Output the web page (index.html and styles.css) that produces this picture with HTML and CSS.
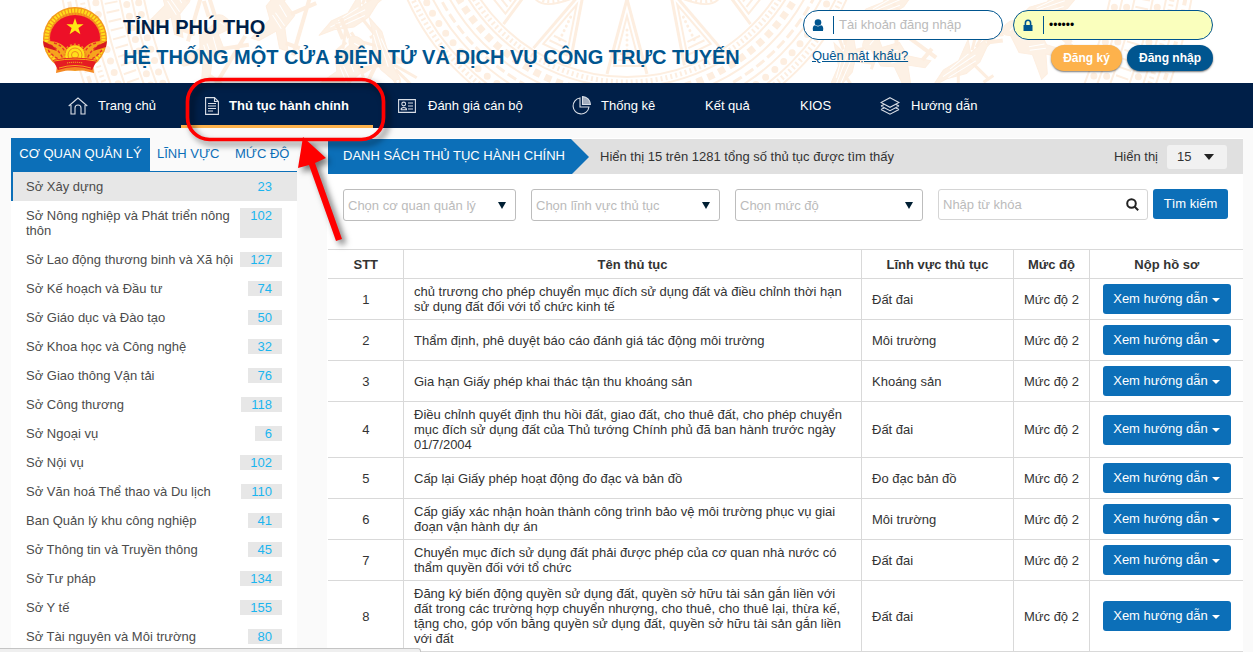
FILE: index.html
```html
<!DOCTYPE html>
<html lang="vi">
<head>
<meta charset="utf-8">
<title>Hệ thống một cửa điện tử và dịch vụ công trực tuyến</title>
<link rel="stylesheet" href="styles.css">
</head>
<body>
<header class="header">
  <svg class="pattern" viewBox="0 0 1253 83" fill="none" stroke="#fdeee0">
    <defs>
      <g id="ray"><path d="M0 99L-20 174M0 99L20 174" stroke-width="3"/><path d="M0 116L-13 166H13Z" stroke-width="2"/><path d="M-7 154H7M-9 160H9" stroke-width="2"/><path d="M0 130V160" stroke-dasharray="0 5" stroke-linecap="round" stroke-width="3"/></g>
      <g id="drop"><path d="M0 92C-6 101-10 108-8 114Q0 126 8 114C10 108 6 101 0 92" fill="#fdeee0"/><path d="M-21 108Q0 148 21 108M-27 106Q0 164 27 106" stroke-width="2"/><path d="M-24 107Q0 156 24 107" stroke-dasharray="2 3" stroke-width="4"/></g>
      <g id="bird"><path d="M-38 3L-20-4L-2-3L18-15L12-2L30-5L47-2L29 2L15 10L-3 12L-22 5Z" fill="#fdf1e5"/><path d="M-5 1L-23 26M7 2L12 29M15-4L35-21M20-4L43-15M-30 25L-17 22M6 29H18" stroke-width="3"/><circle cx="32" cy="-2" r="2" fill="#fff"/><path d="M-24 1L15 2M-20 5L12 7M-14-1L10-3" stroke="#fff"/></g>
      <g id="person"><path d="M-12-24Q-20-32-10-35Q3-36 2-26L-3-17L12-7L7 8L18 29H9L0 14L-13 29H-21L-10 5L-18-6Z" fill="#fdf1e5"/><path d="M8-7L28-26M20-31L24 31M13 22H28M-21-26L-34-36M-16-30L-33-43" stroke-width="4"/><path d="M-9-28H-3M-6-12L5-3M-7-3L6 6M-9 0L4 10" stroke="#fff"/></g>
    </defs>
    <g transform="translate(627 -100)">
      <use href="#ray"/><use href="#ray" transform="rotate(-25.7)"/><use href="#ray" transform="rotate(25.7)"/><use href="#ray" transform="rotate(-51.4)"/><use href="#ray" transform="rotate(51.4)"/>
      <use href="#drop" transform="rotate(42)"/><use href="#drop" transform="rotate(-42)"/>
      <g stroke-width="2"><circle r="177"/><circle r="187"/><circle r="203"/><circle r="218"/><circle r="231"/><circle r="241"/></g>
      <circle r="182" stroke-width="5" stroke-dasharray="2 3"/>
      <circle r="195" stroke-width="7" stroke-dasharray="7 5"/>
      <circle r="211" stroke-width="3" stroke-dasharray="10 4"/>
      <circle r="225" stroke-width="7" stroke-linecap="round" stroke-dasharray="0 12"/>
      <circle r="236" stroke-width="5" stroke-dasharray="2 3"/>
      <g stroke-width="2"><circle r="493"/><circle r="505"/><circle r="517"/><circle r="535"/><circle r="548"/><circle r="560"/><circle r="573"/></g>
      <circle r="499" stroke-width="7" stroke-linecap="round" stroke-dasharray="0 12"/><circle r="511" stroke-width="7" stroke-linecap="round" stroke-dasharray="0 12"/>
      <circle r="526" stroke-width="13" stroke-dasharray="2 7"/><circle r="541" stroke-width="7" stroke-linecap="round" stroke-dasharray="0 12"/><circle r="554" stroke-width="5" stroke-dasharray="2 3"/><circle r="567" stroke-width="4" stroke-dasharray="7 4"/>
    </g>
    <use href="#bird" transform="translate(351 15) rotate(-28)"/><use href="#bird" transform="translate(385 52) rotate(70)"/>
    <use href="#person" transform="translate(281 18) rotate(20)"/><use href="#person" transform="translate(211 50) rotate(35)"/><use href="#person" transform="translate(348 72) rotate(30)"/><use href="#person" transform="translate(176 4) rotate(20)"/>
    <use href="#bird" transform="translate(886 4) rotate(-25)"/><use href="#person" transform="translate(897 56) rotate(-50)"/><use href="#bird" transform="translate(842 65) rotate(-70)"/>
    <use href="#bird" transform="translate(962 62) rotate(-35)"/><use href="#person" transform="translate(1036 44) rotate(-45)"/><use href="#bird" transform="translate(1050 4) rotate(-20)"/>
  </svg>
  <svg class="emblem" viewBox="0 0 66 66">
    <path d="M16 48L50 48L51 65Q33 56 15 65Z" fill="#f58a24"/>
    <circle cx="33" cy="32" r="32" fill="#f39a1d"/>
    <circle cx="33" cy="32" r="28.5" fill="none" stroke="#ffdf1b" stroke-width="4" stroke-dasharray="2 1.2"/>
    <circle cx="33" cy="32" r="25" fill="none" stroke="#f4841e" stroke-width="2" stroke-dasharray="1 2"/>
    <ellipse cx="33" cy="31" rx="25" ry="23" fill="#ed1028"/>
    <path d="M33 11L35.1 17.2H41.6L36.4 21L38.4 27.2L33 23.4L27.6 27.2L29.6 21L24.4 17.2H30.9Z" fill="#ffe814"/>
    <path d="M6 34Q21 34 27 46L22 56Q8 51 4 39ZM60 34Q45 34 39 46L44 56Q58 51 62 39Z" fill="#f6a41d"/>
    <path d="M8 38Q16 41 21 52M12 36Q21 38 25 49M6 43Q12 51 21 54M58 38Q50 41 45 52M54 36Q45 38 41 49M60 43Q54 51 45 54" fill="none" stroke="#e7322a" stroke-width="1.4" stroke-dasharray="3 2"/>
    <path d="M1 34L11 39L15 44L2 40ZM65 34L55 39L51 44L64 40Z" fill="#d71920"/>
    <circle cx="33" cy="48" r="10" fill="#ffdf1b"/><g fill="none" stroke="#ef8a1d"><circle cx="33" cy="48" r="10.5" stroke-width="2" stroke-dasharray="2 2"/><circle cx="33" cy="48" r="7"/><circle cx="33" cy="48" r="3.5"/></g>
    <path d="M15 58L14 66Q33 60 52 66L51 58Q33 53 15 58Z" fill="#f58a24"/>
    <path d="M11 53Q33 48 55 53L50 63Q33 57 16 63Z" fill="#e51b23"/>
    <path d="M12 54Q33 50 54 54M17 61Q33 56 49 61" fill="none" stroke="#f8a51c"/>
    <path d="M25 56Q33 54.5 41 56" fill="none" stroke="#f9c21c" stroke-dasharray="1.2 .8"/>
  </svg>
  <div class="brand"><div class="province">TỈNH PHÚ THỌ</div><div class="system">HỆ THỐNG MỘT CỬA ĐIỆN TỬ VÀ DỊCH VỤ CÔNG TRỰC TUYẾN</div></div>
  <div class="login">
    <div class="field"><svg class="fi" viewBox="0 0 12 13" fill="#00558f"><circle cx="6" cy="3.5" r="3.3"/><path d="M1 12Q0 7 3 6.3Q6 8.5 9 6.3Q12 7 11 12Z"/></svg><span class="ph">Tài khoản đăng nhập</span></div>
    <div class="field filled"><svg class="fi" viewBox="0 0 12 13" fill="#00558f"><path d="M1.5 6H10.5V12H1.5Z"/><path d="M3.4 6V4Q3.4 1.3 6 1.3Q8.6 1.3 8.6 4V6" fill="none" stroke="#00558f" stroke-width="1.6"/></svg><span class="ph pw">••••••</span></div>
    <a class="forgot">Quên mật khẩu?</a>
    <div class="actions"><button class="pill register">Đăng ký</button><button class="pill signin">Đăng nhập</button></div>
  </div>
</header>
<nav class="nav">
  <a class="ni n1"><svg width="20" height="18" viewBox="0 0 20 18"><path d="M.7 9L10 1L19.3 9M3 8V17H7V11Q7 8 10 8Q13 8 13 11V17H17V8"/></svg>Trang chủ</a>
  <a class="ni n2 active"><svg width="14" height="18" viewBox="0 0 14 18"><path d="M.6.6H9.5L13.4 4.5V17.4H.6ZM9.5.6V4.5H13.4M3 6.5H11M3 9H11M3 11.5H11M3 14H8"/></svg>Thủ tục hành chính</a>
  <a class="ni n3"><svg width="18" height="14" viewBox="0 0 18 14"><path d="M.6.6H17.4V13.4H.6ZM10 4H15M10 7H15M10 10H15M3 10.8H8.5Q8.5 8.5 5.8 8.5Q3 8.5 3 10.8"/><circle cx="5.7" cy="5" r="1.9"/></svg>Đánh giá cán bộ</a>
  <a class="ni n4"><svg width="19" height="19" viewBox="0 0 19 19"><path d="M8 2A8 8 0 1 0 17 11H8Z"/><path d="M10.5.6V8.5H18.4A8 8 0 0 0 10.5.6Z" fill="#a1acbd"/></svg>Thống kê</a>
  <a class="ni n5">Kết quả</a><a class="ni n6">KIOS</a>
  <a class="ni n7"><svg width="20" height="18" viewBox="0 0 20 18"><path d="M10 .7L19 5.5L10 10.3L1 5.5ZM1 9L10 13.7L19 9M1 12.4L10 17.2L19 12.4M1 9L4 7.4M19 9L16 7.4M1 12.4L4 10.9M19 12.4L16 10.9"/></svg>Hướng dẫn</a>
</nav>
<main class="page">
  <aside class="side">
    <div class="tabs"><span class="tab on">CƠ QUAN QUẢN LÝ</span><span class="tab t2">LĨNH VỰC</span><span class="tab t3">MỨC ĐỘ</span></div>
    <div class="org sel"><span>Sở Xây dựng</span><b>23</b></div>
    <div class="org"><span>Sở Nông nghiệp và Phát triển nông<br>thôn</span><b>102</b></div>
    <div class="org"><span>Sở Lao động thương binh và Xã hội</span><b>127</b></div>
    <div class="org"><span>Sở Kế hoạch và Đầu tư</span><b>74</b></div>
    <div class="org"><span>Sở Giáo dục và Đào tạo</span><b>50</b></div>
    <div class="org"><span>Sở Khoa học và Công nghệ</span><b>32</b></div>
    <div class="org"><span>Sở Giao thông Vận tải</span><b>76</b></div>
    <div class="org"><span>Sở Công thương</span><b>118</b></div>
    <div class="org"><span>Sở Ngoại vụ</span><b>6</b></div>
    <div class="org"><span>Sở Nội vụ</span><b>102</b></div>
    <div class="org"><span>Sở Văn hoá Thể thao và Du lịch</span><b>110</b></div>
    <div class="org"><span>Ban Quản lý khu công nghiệp</span><b>41</b></div>
    <div class="org"><span>Sở Thông tin và Truyền thông</span><b>45</b></div>
    <div class="org"><span>Sở Tư pháp</span><b>134</b></div>
    <div class="org"><span>Sở Y tế</span><b>155</b></div>
    <div class="org"><span>Sở Tài nguyên và Môi trường</span><b>80</b></div>
  </aside>
  <section class="content">
    <div class="titlebar"><div class="title">DANH SÁCH THỦ TỤC HÀNH CHÍNH</div><span class="summary">Hiển thị 15 trên 1281 tổng số thủ tục được tìm thấy</span><span class="show">Hiển thị</span><span class="count">15<i class="tri"></i></span></div>
    <div class="filters">
      <div class="select s1">Chọn cơ quan quản lý<i class="tri"></i></div><div class="select s2">Chọn lĩnh vực thủ tục<i class="tri"></i></div><div class="select s3">Chọn mức độ<i class="tri"></i></div>
      <div class="search">Nhập từ khóa<svg width="13" height="13" viewBox="0 0 13 13" fill="none" stroke="#222" stroke-width="2"><circle cx="5.5" cy="5.5" r="4.3"/><path d="M8.7 8.7L12.2 12.2"/></svg></div><button class="find">Tìm kiếm</button>
    </div>
    <table class="grid">
      <colgroup><col class="c1"><col class="c2"><col class="c3"><col class="c4"><col class="c5"></colgroup>
      <tr class="h29"><th>STT</th><th>Tên thủ tục</th><th>Lĩnh vực thủ tục</th><th>Mức độ</th><th>Nộp hồ sơ</th></tr>
      <tr class="h41"><td>1</td><td>chủ trương cho phép chuyển mục đích sử dụng đất và điều chỉnh thời hạn<br>sử dụng đất đối với tổ chức kinh tế</td><td>Đất đai</td><td>Mức độ 2</td><td><button class="guide">Xem hướng dẫn<i></i></button></td></tr>
      <tr class="h41"><td>2</td><td>Thẩm định, phê duyệt báo cáo đánh giá tác động môi trường</td><td>Môi trường</td><td>Mức độ 2</td><td><button class="guide">Xem hướng dẫn<i></i></button></td></tr>
      <tr class="h41"><td>3</td><td>Gia hạn Giấy phép khai thác tận thu khoáng sản</td><td>Khoáng sản</td><td>Mức độ 2</td><td><button class="guide">Xem hướng dẫn<i></i></button></td></tr>
      <tr class="h56"><td>4</td><td>Điều chỉnh quyết định thu hồi đất, giao đất, cho thuê đất, cho phép chuyển<br>mục đích sử dụng đất của Thủ tướng Chính phủ đã ban hành trước ngày<br>01/7/2004</td><td>Đất đai</td><td>Mức độ 2</td><td><button class="guide">Xem hướng dẫn<i></i></button></td></tr>
      <tr class="h41"><td>5</td><td>Cấp lại Giấy phép hoạt động đo đạc và bản đồ</td><td>Đo đạc bản đồ</td><td>Mức độ 2</td><td><button class="guide">Xem hướng dẫn<i></i></button></td></tr>
      <tr class="h41"><td>6</td><td>Cấp giấy xác nhận hoàn thành công trình bảo vệ môi trường phục vụ giai<br>đoạn vận hành dự án</td><td>Môi trường</td><td>Mức độ 2</td><td><button class="guide">Xem hướng dẫn<i></i></button></td></tr>
      <tr class="h41"><td>7</td><td>Chuyển mục đích sử dụng đất phải được phép của cơ quan nhà nước có<br>thẩm quyền đối với tổ chức</td><td>Đất đai</td><td>Mức độ 2</td><td><button class="guide">Xem hướng dẫn<i></i></button></td></tr>
      <tr class="h71"><td>8</td><td>Đăng ký biến động quyền sử dụng đất, quyền sở hữu tài sản gắn liền với<br>đất trong các trường hợp chuyển nhượng, cho thuê, cho thuê lại, thừa kế,<br>tặng cho, góp vốn bằng quyền sử dụng đất, quyền sở hữu tài sản gắn liền<br>với đất</td><td>Đất đai</td><td>Mức độ 2</td><td><button class="guide">Xem hướng dẫn<i></i></button></td></tr>
    </table>
  </section>
</main>
<div class="status"></div>
<svg class="callout" viewBox="0 0 220 180"><rect x="7.5" y="9.5" width="196" height="60" rx="22" fill="none" stroke="#f00" stroke-width="3.7"/><path d="M123 67L118 98L129 95L156 171L162 169L135 93L146 88Z" fill="#f00"/></svg>
</body>
</html>
```

FILE: styles.css
```css
* { box-sizing: border-box; }
body { margin: 0; width: 1253px; height: 652px; overflow: hidden; position: relative; background: #fafafa; color: #333; font: 13px/15px "Liberation Sans", Arial, sans-serif; }
button { font: inherit; border: 0; padding: 0; color: #fff; letter-spacing: inherit; }
.header { height: 83px; background: #fff; position: relative; display: flex; }
.pattern { position: absolute; inset: 0; width: 1253px; height: 83px; }
.emblem { position: relative; width: 66px; height: 66px; margin: 7px 0 0 42px; }
.brand { position: relative; margin: 14px 0 0 15px; width: 680px; font-weight: bold; white-space: nowrap; }
.province { font-size: 20px; line-height: 26px; color: #001f48; }
.system { font-size: 20px; line-height: 26px; margin-top: 4px; color: #00558f; }
.login { position: relative; width: 410px; height: 63px; margin-top: 10px; display: grid; grid-template-columns: 200px 200px; column-gap: 10px; grid-template-rows: 30px 32px; }
.field { height: 30px; border: 1px solid #00558f; border-radius: 15px; background: #fff; display: flex; align-items: center; padding-left: 8px; }
.filled { background: #faffbd; }
.fi { width: 12px; height: 13px; }
.ph { border-left: 1px solid #00558f; margin-left: 9px; padding-left: 5px; height: 18px; line-height: 17px; color: #bbb; }
.pw { color: #000; font-size: 12px; line-height: 18px; }
.forgot { color: #00558f; text-decoration: underline; margin: 8px 0 0 9px; }
.actions { display: flex; justify-content: flex-end; gap: 5px; padding-top: 5px; }
.pill { height: 26px; border-radius: 13px; font-size: 12px; font-weight: bold; box-shadow: 0 1px 2px #0008; }
.register { width: 71px; background: #fdb24c; }
.signin { width: 86px; background: #00558f; }
.nav { height: 45px; background: #001f48; display: flex; color: #fff; }
.ni { height: 45px; display: flex; align-items: center; white-space: nowrap; }
.ni svg { fill: none; stroke: #d9dee6; stroke-width: 1.1; margin-right: 10px; }
.n1 { width: 181px; padding-left: 68px; }
.n2 { width: 192px; padding-left: 24px; border-bottom: 3px solid #fdb24c; padding-top: 3px; font-weight: bold; }
.n3 { width: 199px; padding-left: 25px; }
.n3 svg { margin-right: 12px; }
.n4 { width: 133px; }
.n5 { width: 95px; }
.n6 { width: 80px; }
.n7 svg { margin-right: 11px; }
.page { display: flex; padding-left: 11px; }
.side { width: 286px; height: 514px; margin-top: 10px; background: #fff; color: #4c4c4c; }
.tabs { height: 34px; background: #fafafa; border-bottom: 1px solid #0c6fb8; display: flex; color: #0c6fb8; line-height: 31px; white-space: nowrap; }
.tab.on { width: 139px; text-align: center; background: #0c6fb8; color: #fff; }
.t2 { margin-left: 7px; width: 78px; }
.org { display: flex; justify-content: space-between; padding: 7px 15px; white-space: nowrap; }
.sel { background: #e7e7e7; box-shadow: inset 2px 0 #0c6fb8; }
.org b { font-weight: normal; background: #e7e7e7; color: #1bb5ef; padding: 0 10px; }
.content { width: 916px; height: 514px; margin: 10px 0 0 30px; padding: 1px 0 0 1px; background: #fff; }
.titlebar { height: 35px; background: #e0e0e0; display: flex; align-items: center; }
.title { width: 261px; height: 35px; line-height: 33px; background: #0c6fb8; clip-path: polygon(0 0, 243px 0, 261px 18px, 244px 100%, 0 100%); color: #fff; padding-left: 15px; white-space: nowrap; }
.summary { margin-left: 11px; white-space: nowrap; }
.show { margin-left: auto; }
.count { width: 60px; height: 24px; margin: 0 16px 0 9px; border-radius: 3px; background: #f1f1f1; display: flex; align-items: center; justify-content: space-between; padding: 0 13px 0 10px; }
.tri { border: solid transparent; border-width: 6px 5px 0; border-top-color: #222; }
.filters { height: 75px; display: flex; padding: 15px 0 0 15px; align-items: flex-start; color: #bbb; white-space: nowrap; }
.select { height: 32px; border: 1px solid #bdbdbd; border-radius: 3px; display: flex; align-items: center; justify-content: space-between; padding: 0 9px 0 4px; margin-right: 15px; }
.select .tri { border-width: 7px 4px 0; border-top-color: #001f33; }
.s1 { width: 173px; }
.s2 { width: 189px; }
.s3 { width: 188px; }
.search { width: 210px; height: 31px; border: 1px solid #d5d5d5; border-radius: 3px; display: flex; align-items: center; justify-content: space-between; padding: 0 8px 0 4px; }
.find { width: 75px; height: 30px; padding-bottom: 2px; border-radius: 3px; background: #0c6fb8; margin-left: 5px; }
.grid { width: 915px; table-layout: fixed; border-collapse: collapse; }
.c1 { width: 75px; }
.c2 { width: 458px; }
.c3 { width: 152px; }
.c4 { width: 76px; }
.c5 { width: 154px; }
.grid th, .grid td { border: 1px solid #d9d9d9; padding: 0 0 0 10.5px; white-space: nowrap; line-height: 15px; }
.grid th { padding: 0 0 0 1px; }
.grid th:first-child, .grid td:first-child { border-left: 0; padding: 0 0 0 1px; text-align: center; }
.grid th:last-child, .grid td:last-child { border-right: 0; }
.grid td:last-child { padding-left: 13px; }
.h29 { height: 29px; }
.h41 { height: 41px; }
.h56 { height: 56px; }
.h71 { height: 71px; }
.guide { display: flex; align-items: center; justify-content: center; width: 128px; height: 30px; padding-bottom: 2px; border-radius: 3px; background: #0c6fb8; }
.guide i { border: solid transparent; border-width: 4px 4px 0; border-top-color: #fff; margin: 3px 0 0 4px; }
.status { position: absolute; left: 0; bottom: 0; width: 421px; height: 4px; background: #efefef; border: solid #c4c4c4; border-width: 1px 1px 0 0; border-top-right-radius: 3px; }
.callout { position: absolute; left: 180px; top: 70px; width: 220px; height: 180px; filter: drop-shadow(4px 4px 3px #0008); }
```
